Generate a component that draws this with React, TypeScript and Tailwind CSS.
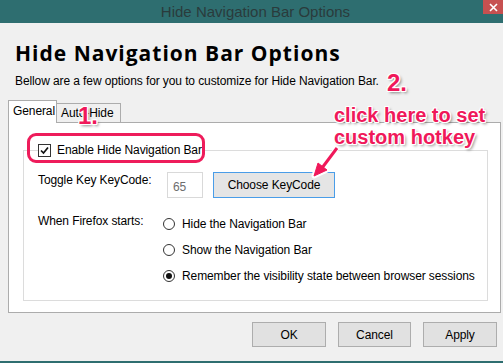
export default function App() {
  const anno =
    "text-[#f0185a] font-bold tracking-normal [text-shadow:1px_0_0_#fff,-1px_0_0_#fff,0_1px_0_#fff,0_-1px_0_#fff,1px_1px_0_#fff,-1px_-1px_0_#fff,1px_-1px_0_#fff,-1px_1px_0_#fff,2px_2px_3px_rgba(0,0,0,0.45)]";
  const radios = [
    { label: "Hide the Navigation Bar", on: false },
    { label: "Show the Navigation Bar", on: false },
    { label: "Remember the visibility state between browser sessions", on: true },
  ];
  return (
    <div className="relative w-[503px] h-[363px] overflow-hidden bg-[#f0f0f0] flex flex-col font-['Liberation_Sans',Arial,sans-serif] text-[12px] leading-[16px] tracking-[-0.1px] text-black">
      {/* Title bar */}
      <div className="relative h-[23px] shrink-0 bg-[#2e6e70] flex items-center justify-center pl-[8px]">
        <span className="text-[15px] leading-[18px] tracking-normal text-[#2a3b3c]">Hide Navigation Bar Options</span>
        <div className="absolute right-0 top-0 w-[20px] h-[14px] bg-[#c75050] flex items-center justify-center">
          <svg width="9" height="9" viewBox="0 0 9 9">
            <path d="M1 1L8 8M8 1L1 8" stroke="#fff" strokeWidth="1.6" />
          </svg>
        </div>
      </div>

      <div className="flex-1 flex flex-col">
        <h1 className="mt-[18px] mb-[1px] ml-[15px] font-['Open_Sans',Arial,sans-serif] text-[21px] leading-[24px] font-bold tracking-[1px]">
          Hide Navigation Bar Options
        </h1>
        <p className="mt-[7px] ml-[15px]">Bellow are a few options for you to customize for Hide Navigation Bar.</p>

        {/* Tabs */}
        <div className="mt-[11px] ml-[8px] flex items-end h-[22px]">
          <div className="relative z-10 -mb-px h-[23px] w-[49px] bg-white border border-b-0 border-[#acacac] pl-[4px] pt-[2px]">
            General
          </div>
          <div className="h-[19px] w-[64px] bg-[#f0f0f0] border border-b-0 border-l-0 border-[#acacac] pl-[4px] pt-[1px]">
            Auto-Hide
          </div>
        </div>

        {/* Panel */}
        <div className="ml-[8px] w-[493px] h-[191px] bg-white border border-[#acacac] flex flex-col">
          <fieldset className="mt-[19px] ml-[14px] mr-[12px] border border-[#dcdcdc] pl-[14px] pb-[11px]">
            <legend className="h-[16px] flex items-center pr-[3px]">
              <span className="w-[13px] h-[13px] mt-[1px] border border-[#333] bg-white flex items-center justify-center">
                <svg width="9" height="9" viewBox="0 0 9 9">
                  <path d="M1 4.5L3.5 7L8 1.5" stroke="#111" strokeWidth="1.7" fill="none" />
                </svg>
              </span>
              <span className="ml-[6px]">Enable Hide Navigation Bar</span>
            </legend>

            <div className="mt-[14px] flex items-start">
              <span className="w-[129px]">Toggle Key KeyCode:</span>
              <div className="w-[36px] h-[26px] border border-[#d9d9d9] text-[#6d6d6d] flex items-center pl-[5px] pt-[3px]">65</div>
              <button className="ml-[10px] w-[122px] h-[26px] border border-[#4a9de8] bg-[#e5e5e5] flex items-center justify-center">
                Choose KeyCode
              </button>
            </div>

            <div className="mt-[13px] flex items-start">
              <span className="w-[125px] pt-[2px]">When Firefox starts:</span>
              <div className="flex flex-col">
                {radios.map((r) => (
                  <div key={r.label} className="h-[26px] flex items-center">
                    <span className="w-[12px] h-[12px] rounded-full border border-[#333] bg-white flex items-center justify-center">
                      {r.on && <span className="w-[6px] h-[6px] rounded-full bg-[#111]" />}
                    </span>
                    <span className="ml-[7px]">{r.label}</span>
                  </div>
                ))}
              </div>
            </div>
          </fieldset>
        </div>

        {/* Buttons */}
        <div className="mt-[9px] flex justify-end pr-[6px] gap-[12px]">
          <button className="w-[74px] h-[25px] border border-[#adadad] bg-[#e1e1e1]">OK</button>
          <button className="w-[73px] h-[25px] border border-[#adadad] bg-[#e1e1e1]">Cancel</button>
          <button className="w-[74px] h-[25px] border border-[#adadad] bg-[#e1e1e1]">Apply</button>
        </div>
      </div>
      <div className="h-[2px] shrink-0 bg-[#2e6e70]" />

      {/* Annotations */}
      <div className="absolute left-[27px] top-[133px] w-[178px] h-[30px] border-[3px] border-[#ee1c5b] rounded-[9px]" />
      <div className={`absolute left-[78px] top-[104px] text-[24px] leading-[24px] ${anno}`}>1.</div>
      <div className={`absolute left-[387px] top-[71px] text-[24px] leading-[24px] ${anno}`}>2.</div>
      <div className={`absolute left-[334px] top-[104px] text-[20px] leading-[22px] ${anno}`}>
        click here to set
        <br />
        custom hotkey
      </div>
      <svg className="absolute left-[305px] top-[144px]" width="40" height="40" viewBox="0 0 40 40">
        <g stroke="#fff" strokeWidth="5" fill="#fff" strokeLinejoin="round">
          <path d="M32 4L17 24" />
          <path d="M9 32L13 19L22 26Z" />
        </g>
        <g stroke="#f0185a" strokeWidth="3" fill="#f0185a" strokeLinejoin="round">
          <path d="M32 4L17 24" />
          <path d="M9 32L13 19L22 26Z" strokeWidth="1" />
        </g>
      </svg>
    </div>
  );
}
